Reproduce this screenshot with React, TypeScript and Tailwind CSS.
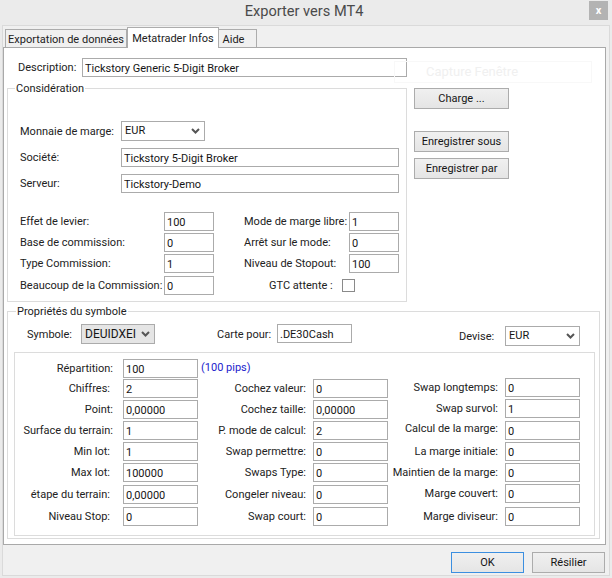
import React from "react";

function Chevron() {
  return (
    <svg width="9" height="6" viewBox="0 0 9 6" className="shrink-0">
      <path d="M1 1 L4.5 4.5 L8 1" fill="none" stroke="#555" strokeWidth="2" />
    </svg>
  );
}

function Field({ value, className = "" }: { value: string; className?: string }) {
  return (
    <input
      readOnly
      value={value}
      className={`h-[19px] shrink-0 border border-[#ababab] bg-white pl-[2px] pt-[2px] text-[11px] text-[#151515] outline-none ${className}`}
    />
  );
}

function Select({ value, className = "" }: { value: string; className?: string }) {
  return (
    <div
      className={`flex h-[20px] shrink-0 items-center justify-between overflow-hidden whitespace-nowrap border border-[#ababab] pl-[3px] pr-[4px] text-[11px] text-[#151515] ${className}`}
    >
      <span>{value}</span>
      <Chevron />
    </div>
  );
}

function Legend({ children, className = "" }: { children: React.ReactNode; className?: string }) {
  return (
    <span className={`absolute top-[-7px] whitespace-nowrap bg-white px-[1px] text-[11px] leading-[14px] text-[#222] ${className}`}>
      {children}
    </span>
  );
}

function Btn({ children, className = "" }: { children: React.ReactNode; className?: string }) {
  return (
    <button className={`flex h-[21px] items-center justify-center whitespace-nowrap border border-[#acacac] bg-gradient-to-b from-[#f0f0f0] to-[#e5e5e5] pt-[2px] text-[11px] text-[#151515] ${className}`}>
      {children}
    </button>
  );
}

function LeverRow({
  l1, v1, l2, v2, className = "",
}: { l1: string; v1: string; l2: string; v2: string; className?: string }) {
  return (
    <div className={`flex h-[19px] items-center whitespace-nowrap text-[11px] text-[#222] ${className}`}>
      <span className="w-[144px] shrink-0 pt-[2px]">{l1}</span>
      <Field value={v1} className="w-[50px]" />
      <span className="ml-[30px] w-[105px] shrink-0 pt-[2px]">{l2}</span>
      <Field value={v2} className="w-[50px]" />
    </div>
  );
}

type Row = { l: string; v: string; mt: string; lc: string };

function Column({ rows, className = "" }: { rows: Row[]; className?: string }) {
  return (
    <div className={`flex shrink-0 flex-col ${className}`}>
      {rows.map((r) => (
        <div key={r.l} className={`flex h-[19px] items-center ${r.mt}`}>
          <span className={`shrink-0 whitespace-nowrap pt-[2px] text-right text-[11px] text-[#222] ${r.lc}`}>{r.l}</span>
          <Field value={r.v} className="w-[75px]" />
        </div>
      ))}
    </div>
  );
}

const col1: Row[] = [
  { l: "Chiffres:", v: "2", mt: "mt-0", lc: "w-[108px] pr-[13px]" },
  { l: "Point:", v: "0,00000", mt: "mt-[2px]", lc: "w-[108px] pr-[10px]" },
  { l: "Surface du terrain:", v: "1", mt: "mt-[2px]", lc: "w-[108px] pr-[10px]" },
  { l: "Min lot:", v: "1", mt: "mt-[2px]", lc: "w-[108px] pr-[13px]" },
  { l: "Max lot:", v: "100000", mt: "mt-[2px]", lc: "w-[108px] pr-[13px]" },
  { l: "étape du terrain:", v: "0,00000", mt: "mt-[3px]", lc: "w-[108px] pr-[13px]" },
  { l: "Niveau Stop:", v: "0", mt: "mt-[3px]", lc: "w-[108px] pr-[13px]" },
];
const l2 = "w-[115px] pr-[7px]";
const col2: Row[] = [
  { l: "Cochez valeur:", v: "0", mt: "mt-0", lc: l2 },
  { l: "Cochez taille:", v: "0,00000", mt: "mt-[2px]", lc: l2 },
  { l: "P. mode de calcul:", v: "2", mt: "mt-[2px]", lc: l2 },
  { l: "Swap permettre:", v: "0", mt: "mt-[2px]", lc: l2 },
  { l: "Swaps Type:", v: "0", mt: "mt-[2px]", lc: l2 },
  { l: "Congeler niveau:", v: "0", mt: "mt-[3px]", lc: l2 },
  { l: "Swap court:", v: "0", mt: "mt-[3px]", lc: l2 },
];
const l3 = "w-[117px] pr-[7px]";
const col3: Row[] = [
  { l: "Swap longtemps:", v: "0", mt: "mt-[-1px]", lc: l3 },
  { l: "Swap survol:", v: "1", mt: "mt-[2px]", lc: l3 },
  { l: "Calcul de la marge:", v: "0", mt: "mt-[3px]", lc: `${l3} mb-[5px]` },
  { l: "La marge initiale:", v: "0", mt: "mt-[2px]", lc: l3 },
  { l: "Maintien de la marge:", v: "0", mt: "mt-[2px]", lc: l3 },
  { l: "Marge couvert:", v: "0", mt: "mt-[2px]", lc: l3 },
  { l: "Marge diviseur:", v: "0", mt: "mt-[4px]", lc: l3 },
];

export default function App() {
  return (
    <div className="relative flex h-[578px] w-[612px] flex-col overflow-hidden bg-[#ebebeb] font-['Roboto',sans-serif]">
      {/* Title bar */}
      <div className="flex h-[25px] shrink-0 items-start">
        <div className="flex-1" />
        <span className="mt-[1px] text-[14.6px] leading-[20px] text-[#4a4a4a]">Exporter vers MT4</span>
        <div className="flex flex-1 justify-end pr-[4px] pt-[1px]">
          <div className="flex h-[19px] w-[19px] items-center justify-center bg-[#b3b3b3] text-[11px] font-bold leading-none text-white">x</div>
        </div>
      </div>

      {/* Window body */}
      <div className="mx-[2px] mb-[2px] flex flex-1 flex-col border border-[#dadada] bg-[#f0f0f0]">
        {/* Tabs */}
        <div className="flex h-[21px] shrink-0 items-end whitespace-nowrap pl-[1px] text-[11px] text-[#222]">
          <div className="ml-[1px] flex h-[18px] w-[122px] items-center justify-center border-x border-t border-[#acacac] bg-[#f0f0f0] pt-[3px]">Exportation de données</div>
          <div className="relative z-10 mb-[-1px] flex h-[21px] w-[92px] items-start justify-center border-x border-t border-[#acacac] bg-white pt-[3px]">Metatrader Infos</div>
          <div className="flex h-[18px] w-[38px] items-center justify-center border-r border-t border-[#acacac] bg-[#f0f0f0] pr-[8px] pt-[3px]">Aide</div>
        </div>

        {/* Tab panel */}
        <div className="relative mr-[3px] h-[498px] shrink-0 border border-[#a9a9a9] bg-white">
          {/* Faded, nearly invisible button */}
          <div className="absolute left-[390px] top-[13px] flex h-[22px] w-[198px] items-center justify-center border border-[#f8f8f8] pr-[42px] text-[13px] text-[#f0f0f0]">
            Capture Fenêtre
          </div>

          {/* Description */}
          <div className="mt-[10px] flex items-center whitespace-nowrap text-[11px] text-[#222]">
            <span className="w-[78px] shrink-0 pl-[14px] pt-[2px]">Description:</span>
            <Field value="Tickstory Generic 5-Digit Broker" className="w-[325px]" />
          </div>

          {/* Considération + buttons */}
          <div className="ml-[3px] mt-[11px] flex items-start">
            <div className="relative h-[214px] w-[400px] shrink-0 whitespace-nowrap border border-[#dcdcdc] pl-[12px] pt-[32px]">
              <Legend className="left-[7px]">Considération</Legend>
              <div className="flex items-center text-[11px] text-[#222]">
                <span className="w-[101px] shrink-0 pt-[2px]">Monnaie de marge:</span>
                <Select value="EUR" className="w-[84px]" />
              </div>
              <div className="mt-[7px] flex items-center text-[11px] text-[#222]">
                <span className="w-[101px] shrink-0 pt-[2px]">Société:</span>
                <Field value="Tickstory 5-Digit Broker" className="w-[278px]" />
              </div>
              <div className="mt-[7px] flex items-center text-[11px] text-[#222]">
                <span className="w-[101px] shrink-0 pt-[2px]">Serveur:</span>
                <Field value="Tickstory-Demo" className="w-[278px]" />
              </div>
              <LeverRow className="mt-[19px]" l1="Effet de levier:" v1="100" l2="Mode de marge libre:" v2="1" />
              <LeverRow className="mt-[2px]" l1="Base de commission:" v1="0" l2="Arrêt sur le mode:" v2="0" />
              <LeverRow className="mt-[2px]" l1="Type Commission:" v1="1" l2="Niveau de Stopout:" v2="100" />
              <div className="mt-[3px] flex h-[19px] items-center text-[11px] text-[#222]">
                <span className="w-[144px] shrink-0 pt-[2px]">Beaucoup de la Commission:</span>
                <Field value="0" className="w-[50px]" />
                <span className="ml-[55px] w-[73px] shrink-0 pt-[2px]">GTC attente :</span>
                <span className="h-[13px] w-[13px] shrink-0 border border-[#8a8a8a]" />
              </div>
            </div>
            <div className="ml-[7px] flex flex-col">
              <Btn className="w-[95px]">Charge ...</Btn>
              <Btn className="mt-[22px] w-[95px]">Enregistrer sous</Btn>
              <Btn className="mt-[6px] w-[95px]">Enregistrer par</Btn>
            </div>
          </div>

          {/* Propriétés du symbole */}
          <div className="relative ml-[3px] mt-[9px] h-[228px] w-[593px] border border-[#dcdcdc] pl-[6px] pt-[12px]">
            <Legend className="left-[8px]">Propriétés du symbole</Legend>
            <div className="flex h-[22px] items-start whitespace-nowrap text-[11px] text-[#222]">
              <span className="ml-[13px] mt-[3px] w-[54px] shrink-0">Symbole:</span>
              <Select value="DEUIDXEI" className="w-[74px] bg-[#e5e5e5] !text-[12px]" />
              <span className="ml-[62px] mt-[3px] w-[60px] shrink-0">Carte pour:</span>
              <Field value=".DE30Cash" className="w-[75px]" />
              <span className="ml-[107px] mt-[5px] w-[46px] shrink-0">Devise:</span>
              <Select value="EUR" className="mt-[2px] w-[75px]" />
            </div>
            <div className="mt-[6px] h-[184px] w-[581px] border border-[#dcdcdc] pt-[6px]">
              <div className="flex h-[19px] items-center text-[11px]">
                <span className="w-[108px] shrink-0 pr-[10px] pt-[2px] text-right text-[#222]">Répartition:</span>
                <Field value="100" className="w-[75px]" />
                <span className="ml-[3px] text-[#2222cc]">(100 pips)</span>
              </div>
              <div className="mt-px flex items-start">
                <Column rows={col1} />
                <Column rows={col2} />
                <Column rows={col3} />
              </div>
            </div>
          </div>
        </div>

        {/* Footer */}
        <div className="flex flex-1 items-start justify-end pr-[4px] pt-[7px]">
          <Btn className="h-[20px] w-[73px] !border-[#3c8fe0]">OK</Btn>
          <Btn className="ml-[8px] h-[20px] w-[73px]">Résilier</Btn>
        </div>
      </div>
    </div>
  );
}
